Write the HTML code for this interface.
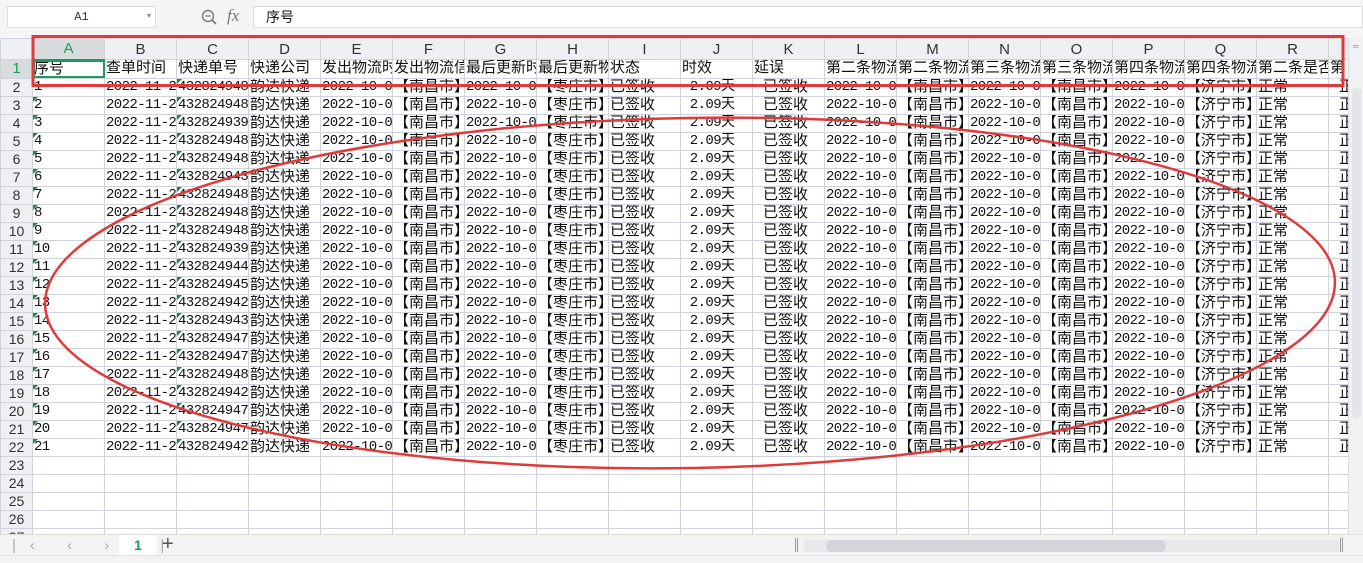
<!DOCTYPE html>
<html><head><meta charset="utf-8"><style>
*{margin:0;padding:0;box-sizing:border-box}
body{width:1363px;height:563px;overflow:hidden;background:#fff;font-family:"Liberation Mono","Noto Sans CJK SC",monospace;font-size:15px;color:#111;position:relative}
.top{position:absolute;left:0;top:0;width:1363px;height:38px;background:#f5f5f5}
.nb{position:absolute;left:7px;top:6px;width:149px;height:22px;background:#fff;border:1px solid #ddd;font-size:12px;text-align:center;line-height:20px;color:#333}
.nb i{position:absolute;right:4px;top:0;font-style:normal;font-size:8px;color:#888}
.fx{position:absolute;left:200px;top:6px;font-size:17px;color:#777;font-family:"Liberation Serif",serif;font-style:italic}
.fb{position:absolute;left:253px;top:6px;right:0;height:22px;background:#fff;border:1px solid #ddd;font-family:"Liberation Sans","Noto Sans CJK SC",sans-serif;font-size:14px;line-height:20px;padding-left:12px}
table{position:absolute;left:0;top:38px;border-collapse:collapse;table-layout:fixed;width:1391px}
td{height:18px;border:1px solid #d0d3da;white-space:nowrap;overflow:hidden;padding:0 0 0 1px;line-height:17px;position:relative}
tr td:nth-child(2),tr td:nth-child(3),tr td:nth-child(4),tr td:nth-child(6),tr td:nth-child(8),tr td:nth-child(11),tr td:nth-child(13),tr td:nth-child(15),tr td:nth-child(17){font-size:14px;letter-spacing:-0.6px}
tr:nth-child(2) td{font-size:15px!important;letter-spacing:0!important}
tr.h td{height:21px;background:#eef0f3;text-align:center;font-family:"Liberation Sans",sans-serif;font-size:15px!important;letter-spacing:0!important;color:#333;padding:0}
td.r{background:#eef0f3;text-align:center;font-family:"Liberation Sans",sans-serif;font-size:14px!important;letter-spacing:0!important;color:#333;padding:0}
td.t::before{content:"";position:absolute;left:0;top:0;border-top:5px solid #1f8a3a;border-right:5px solid transparent}
.vs{position:absolute;left:1348px;top:38px;width:15px;height:496px;background:#f0f1f3;border-left:1px solid #ddd}
.tab{position:absolute;left:0;top:534px;width:1363px;height:21px;background:#f2f3f5;border-top:1px solid #ddd}
.st{position:absolute;left:0;top:555px;width:1363px;height:8px;background:#f2f3f5;border-top:1px solid #e3e3e3}
</style></head><body>
<div class="top"><div class="nb">A1<i>▾</i></div>
<svg style="position:absolute;left:201px;top:9px" width="16" height="16"><circle cx="7" cy="7" r="5.5" fill="none" stroke="#777" stroke-width="1.4"/><line x1="4.5" y1="7" x2="9.5" y2="7" stroke="#777" stroke-width="1.4"/><line x1="11" y1="11" x2="15" y2="15" stroke="#777" stroke-width="1.6"/></svg>
<div class="fx" style="left:227px">fx</div>
<div class="fb">序号</div></div>
<table>
<colgroup><col style="width:32px"><col span="19" style="width:72px"></colgroup>
<tr class="h"><td style="background:#eef0f3"></td><td style="background:#d9dcdf;color:#1e9a5c;border-bottom:2px solid #1e9a5c">A</td><td>B</td><td>C</td><td>D</td><td>E</td><td>F</td><td>G</td><td>H</td><td>I</td><td>J</td><td>K</td><td>L</td><td>M</td><td>N</td><td>O</td><td>P</td><td>Q</td><td>R</td><td></td></tr>
<tr><td class="r" style="background:#d9dcdf;color:#1e9a5c">1</td><td style="outline:2px solid #1e9a5c;outline-offset:-2px">序号</td><td>查单时间</td><td>快递单号</td><td>快递公司</td><td>发出物流时</td><td>发出物流信</td><td>最后更新时</td><td>最后更新物</td><td>状态</td><td>时效</td><td>延误</td><td>第二条物流</td><td>第二条物流</td><td>第三条物流</td><td>第三条物流</td><td>第四条物流</td><td>第四条物流</td><td>第二条是否</td><td>第</td></tr>
<tr><td class="r">2</td><td>1</td><td>2022-11-2</td><td class="t">432824948</td><td>韵达快递</td><td>2022-10-0</td><td>【南昌市】</td><td>2022-10-0</td><td>【枣庄市】</td><td>已签收</td><td>&nbsp;2.09天</td><td>&nbsp;已签收</td><td>2022-10-0</td><td>【南昌市】</td><td>2022-10-0</td><td>【南昌市】</td><td>2022-10-0</td><td>【济宁市】</td><td>正常</td><td>&nbsp;正</td></tr>
<tr><td class="r">3</td><td class="t">2</td><td>2022-11-2</td><td class="t">432824948</td><td>韵达快递</td><td>2022-10-0</td><td>【南昌市】</td><td>2022-10-0</td><td>【枣庄市】</td><td>已签收</td><td>&nbsp;2.09天</td><td>&nbsp;已签收</td><td>2022-10-0</td><td>【南昌市】</td><td>2022-10-0</td><td>【南昌市】</td><td>2022-10-0</td><td>【济宁市】</td><td>正常</td><td>&nbsp;正</td></tr>
<tr><td class="r">4</td><td class="t">3</td><td>2022-11-2</td><td class="t">432824939</td><td>韵达快递</td><td>2022-10-0</td><td>【南昌市】</td><td>2022-10-0</td><td>【枣庄市】</td><td>已签收</td><td>&nbsp;2.09天</td><td>&nbsp;已签收</td><td>2022-10-0</td><td>【南昌市】</td><td>2022-10-0</td><td>【南昌市】</td><td>2022-10-0</td><td>【济宁市】</td><td>正常</td><td>&nbsp;正</td></tr>
<tr><td class="r">5</td><td class="t">4</td><td>2022-11-2</td><td class="t">432824948</td><td>韵达快递</td><td>2022-10-0</td><td>【南昌市】</td><td>2022-10-0</td><td>【枣庄市】</td><td>已签收</td><td>&nbsp;2.09天</td><td>&nbsp;已签收</td><td>2022-10-0</td><td>【南昌市】</td><td>2022-10-0</td><td>【南昌市】</td><td>2022-10-0</td><td>【济宁市】</td><td>正常</td><td>&nbsp;正</td></tr>
<tr><td class="r">6</td><td class="t">5</td><td>2022-11-2</td><td class="t">432824948</td><td>韵达快递</td><td>2022-10-0</td><td>【南昌市】</td><td>2022-10-0</td><td>【枣庄市】</td><td>已签收</td><td>&nbsp;2.09天</td><td>&nbsp;已签收</td><td>2022-10-0</td><td>【南昌市】</td><td>2022-10-0</td><td>【南昌市】</td><td>2022-10-0</td><td>【济宁市】</td><td>正常</td><td>&nbsp;正</td></tr>
<tr><td class="r">7</td><td class="t">6</td><td>2022-11-2</td><td class="t">432824943</td><td>韵达快递</td><td>2022-10-0</td><td>【南昌市】</td><td>2022-10-0</td><td>【枣庄市】</td><td>已签收</td><td>&nbsp;2.09天</td><td>&nbsp;已签收</td><td>2022-10-0</td><td>【南昌市】</td><td>2022-10-0</td><td>【南昌市】</td><td>2022-10-0</td><td>【济宁市】</td><td>正常</td><td>&nbsp;正</td></tr>
<tr><td class="r">8</td><td class="t">7</td><td>2022-11-2</td><td class="t">432824948</td><td>韵达快递</td><td>2022-10-0</td><td>【南昌市】</td><td>2022-10-0</td><td>【枣庄市】</td><td>已签收</td><td>&nbsp;2.09天</td><td>&nbsp;已签收</td><td>2022-10-0</td><td>【南昌市】</td><td>2022-10-0</td><td>【南昌市】</td><td>2022-10-0</td><td>【济宁市】</td><td>正常</td><td>&nbsp;正</td></tr>
<tr><td class="r">9</td><td class="t">8</td><td>2022-11-2</td><td class="t">432824948</td><td>韵达快递</td><td>2022-10-0</td><td>【南昌市】</td><td>2022-10-0</td><td>【枣庄市】</td><td>已签收</td><td>&nbsp;2.09天</td><td>&nbsp;已签收</td><td>2022-10-0</td><td>【南昌市】</td><td>2022-10-0</td><td>【南昌市】</td><td>2022-10-0</td><td>【济宁市】</td><td>正常</td><td>&nbsp;正</td></tr>
<tr><td class="r">10</td><td class="t">9</td><td>2022-11-2</td><td class="t">432824948</td><td>韵达快递</td><td>2022-10-0</td><td>【南昌市】</td><td>2022-10-0</td><td>【枣庄市】</td><td>已签收</td><td>&nbsp;2.09天</td><td>&nbsp;已签收</td><td>2022-10-0</td><td>【南昌市】</td><td>2022-10-0</td><td>【南昌市】</td><td>2022-10-0</td><td>【济宁市】</td><td>正常</td><td>&nbsp;正</td></tr>
<tr><td class="r">11</td><td class="t">10</td><td>2022-11-2</td><td class="t">432824939</td><td>韵达快递</td><td>2022-10-0</td><td>【南昌市】</td><td>2022-10-0</td><td>【枣庄市】</td><td>已签收</td><td>&nbsp;2.09天</td><td>&nbsp;已签收</td><td>2022-10-0</td><td>【南昌市】</td><td>2022-10-0</td><td>【南昌市】</td><td>2022-10-0</td><td>【济宁市】</td><td>正常</td><td>&nbsp;正</td></tr>
<tr><td class="r">12</td><td class="t">11</td><td>2022-11-2</td><td class="t">432824944</td><td>韵达快递</td><td>2022-10-0</td><td>【南昌市】</td><td>2022-10-0</td><td>【枣庄市】</td><td>已签收</td><td>&nbsp;2.09天</td><td>&nbsp;已签收</td><td>2022-10-0</td><td>【南昌市】</td><td>2022-10-0</td><td>【南昌市】</td><td>2022-10-0</td><td>【济宁市】</td><td>正常</td><td>&nbsp;正</td></tr>
<tr><td class="r">13</td><td class="t">12</td><td>2022-11-2</td><td class="t">432824945</td><td>韵达快递</td><td>2022-10-0</td><td>【南昌市】</td><td>2022-10-0</td><td>【枣庄市】</td><td>已签收</td><td>&nbsp;2.09天</td><td>&nbsp;已签收</td><td>2022-10-0</td><td>【南昌市】</td><td>2022-10-0</td><td>【南昌市】</td><td>2022-10-0</td><td>【济宁市】</td><td>正常</td><td>&nbsp;正</td></tr>
<tr><td class="r">14</td><td class="t">13</td><td>2022-11-2</td><td class="t">432824942</td><td>韵达快递</td><td>2022-10-0</td><td>【南昌市】</td><td>2022-10-0</td><td>【枣庄市】</td><td>已签收</td><td>&nbsp;2.09天</td><td>&nbsp;已签收</td><td>2022-10-0</td><td>【南昌市】</td><td>2022-10-0</td><td>【南昌市】</td><td>2022-10-0</td><td>【济宁市】</td><td>正常</td><td>&nbsp;正</td></tr>
<tr><td class="r">15</td><td class="t">14</td><td>2022-11-2</td><td class="t">432824943</td><td>韵达快递</td><td>2022-10-0</td><td>【南昌市】</td><td>2022-10-0</td><td>【枣庄市】</td><td>已签收</td><td>&nbsp;2.09天</td><td>&nbsp;已签收</td><td>2022-10-0</td><td>【南昌市】</td><td>2022-10-0</td><td>【南昌市】</td><td>2022-10-0</td><td>【济宁市】</td><td>正常</td><td>&nbsp;正</td></tr>
<tr><td class="r">16</td><td class="t">15</td><td>2022-11-2</td><td class="t">432824947</td><td>韵达快递</td><td>2022-10-0</td><td>【南昌市】</td><td>2022-10-0</td><td>【枣庄市】</td><td>已签收</td><td>&nbsp;2.09天</td><td>&nbsp;已签收</td><td>2022-10-0</td><td>【南昌市】</td><td>2022-10-0</td><td>【南昌市】</td><td>2022-10-0</td><td>【济宁市】</td><td>正常</td><td>&nbsp;正</td></tr>
<tr><td class="r">17</td><td class="t">16</td><td>2022-11-2</td><td class="t">432824947</td><td>韵达快递</td><td>2022-10-0</td><td>【南昌市】</td><td>2022-10-0</td><td>【枣庄市】</td><td>已签收</td><td>&nbsp;2.09天</td><td>&nbsp;已签收</td><td>2022-10-0</td><td>【南昌市】</td><td>2022-10-0</td><td>【南昌市】</td><td>2022-10-0</td><td>【济宁市】</td><td>正常</td><td>&nbsp;正</td></tr>
<tr><td class="r">18</td><td class="t">17</td><td>2022-11-2</td><td class="t">432824948</td><td>韵达快递</td><td>2022-10-0</td><td>【南昌市】</td><td>2022-10-0</td><td>【枣庄市】</td><td>已签收</td><td>&nbsp;2.09天</td><td>&nbsp;已签收</td><td>2022-10-0</td><td>【南昌市】</td><td>2022-10-0</td><td>【南昌市】</td><td>2022-10-0</td><td>【济宁市】</td><td>正常</td><td>&nbsp;正</td></tr>
<tr><td class="r">19</td><td class="t">18</td><td>2022-11-2</td><td class="t">432824942</td><td>韵达快递</td><td>2022-10-0</td><td>【南昌市】</td><td>2022-10-0</td><td>【枣庄市】</td><td>已签收</td><td>&nbsp;2.09天</td><td>&nbsp;已签收</td><td>2022-10-0</td><td>【南昌市】</td><td>2022-10-0</td><td>【南昌市】</td><td>2022-10-0</td><td>【济宁市】</td><td>正常</td><td>&nbsp;正</td></tr>
<tr><td class="r">20</td><td class="t">19</td><td>2022-11-2</td><td class="t">432824947</td><td>韵达快递</td><td>2022-10-0</td><td>【南昌市】</td><td>2022-10-0</td><td>【枣庄市】</td><td>已签收</td><td>&nbsp;2.09天</td><td>&nbsp;已签收</td><td>2022-10-0</td><td>【南昌市】</td><td>2022-10-0</td><td>【南昌市】</td><td>2022-10-0</td><td>【济宁市】</td><td>正常</td><td>&nbsp;正</td></tr>
<tr><td class="r">21</td><td class="t">20</td><td>2022-11-2</td><td class="t">432824947</td><td>韵达快递</td><td>2022-10-0</td><td>【南昌市】</td><td>2022-10-0</td><td>【枣庄市】</td><td>已签收</td><td>&nbsp;2.09天</td><td>&nbsp;已签收</td><td>2022-10-0</td><td>【南昌市】</td><td>2022-10-0</td><td>【南昌市】</td><td>2022-10-0</td><td>【济宁市】</td><td>正常</td><td>&nbsp;正</td></tr>
<tr><td class="r">22</td><td class="t">21</td><td>2022-11-2</td><td class="t">432824942</td><td>韵达快递</td><td>2022-10-0</td><td>【南昌市】</td><td>2022-10-0</td><td>【枣庄市】</td><td>已签收</td><td>&nbsp;2.09天</td><td>&nbsp;已签收</td><td>2022-10-0</td><td>【南昌市】</td><td>2022-10-0</td><td>【南昌市】</td><td>2022-10-0</td><td>【济宁市】</td><td>正常</td><td>&nbsp;正</td></tr>
<tr><td class="r">23</td><td></td><td></td><td></td><td></td><td></td><td></td><td></td><td></td><td></td><td></td><td></td><td></td><td></td><td></td><td></td><td></td><td></td><td></td><td></td></tr>
<tr><td class="r">24</td><td></td><td></td><td></td><td></td><td></td><td></td><td></td><td></td><td></td><td></td><td></td><td></td><td></td><td></td><td></td><td></td><td></td><td></td><td></td></tr>
<tr><td class="r">25</td><td></td><td></td><td></td><td></td><td></td><td></td><td></td><td></td><td></td><td></td><td></td><td></td><td></td><td></td><td></td><td></td><td></td><td></td><td></td></tr>
<tr><td class="r">26</td><td></td><td></td><td></td><td></td><td></td><td></td><td></td><td></td><td></td><td></td><td></td><td></td><td></td><td></td><td></td><td></td><td></td><td></td><td></td></tr>
<tr><td class="r">27</td><td></td><td></td><td></td><td></td><td></td><td></td><td></td><td></td><td></td><td></td><td></td><td></td><td></td><td></td><td></td><td></td><td></td><td></td><td></td></tr>
</table>
<div class="vs"><div style="position:absolute;left:3px;top:50px;width:9px;height:330px;background:#e2e4e7;border-radius:4px"></div><div style="position:absolute;left:4px;top:4px;font-size:9px;color:#888">═</div></div>
<div class="tab">
<div style="position:absolute;left:12px;top:2px;font-size:15px;color:#aaa;font-family:'Liberation Sans',sans-serif;letter-spacing:14px">|‹ ‹ › ›|</div>
<div style="position:absolute;left:119px;top:0;width:38px;height:20px;background:#fff;text-align:center;font-weight:bold;color:#1e9a5c;font-family:'Liberation Sans',sans-serif;font-size:14px;line-height:20px">1</div>
<div style="position:absolute;left:162px;top:-2px;font-size:20px;color:#555;font-family:'Liberation Sans',sans-serif">+</div>
<div style="position:absolute;left:804px;top:5px;width:535px;height:12px;background:#e8e9eb"></div>
<div style="position:absolute;left:826px;top:5px;width:340px;height:12px;background:#d3d5d9;border-radius:6px"></div>
<div style="position:absolute;left:795px;top:3px;width:3px;height:14px;border-left:1px solid #999;border-right:1px solid #999"></div>
<div style="position:absolute;left:1340px;top:3px;width:3px;height:14px;border-left:1px solid #999;border-right:1px solid #999"></div>
</div>
<div class="st"></div>
<svg style="position:absolute;left:0;top:0" width="1363" height="563">
<rect x="33" y="36.5" width="1310" height="49" fill="none" stroke="#e03a3a" stroke-width="3"/>
<ellipse cx="690" cy="293" rx="645" ry="175" fill="none" stroke="#e03a3a" stroke-width="2.5" transform="rotate(-1 690 293)"/>
</svg>
</body></html>
